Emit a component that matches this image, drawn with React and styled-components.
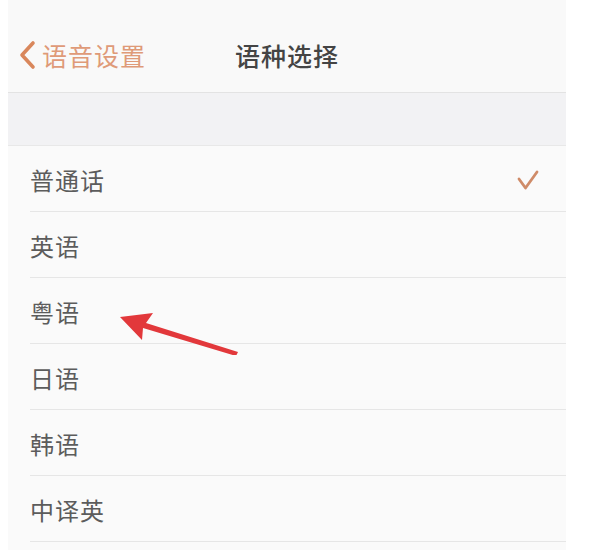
import React from 'react';
import styled, { createGlobalStyle } from 'styled-components';

const GlobalStyle = createGlobalStyle`
  html, body {
    margin: 0;
    padding: 0;
    background: #ffffff;
    font-family: "Noto Sans CJK SC", "Noto Sans", sans-serif;
  }
`;

const languages = ['普通话', '英语', '粤语', '日语', '韩语', '中译英'];

function App() {
  return (
    <>
      <GlobalStyle />
      <Page>
        <Screen>
          <NavBar>
            <BackButton>
              <svg width="18" height="30" viewBox="0 0 18 30">
                <path d="M15 3 L4 15 L15 27" fill="none" stroke="#d9875c" strokeWidth="3.6" strokeLinecap="round" strokeLinejoin="round" />
              </svg>
              <BackLabel>语音设置</BackLabel>
            </BackButton>
            <Title>语种选择</Title>
          </NavBar>
          <SectionGap />
          <List>
            {languages.map((name, i) => (
              <Row key={name}>
                <RowLabel>{name}</RowLabel>
                {i === 0 && (
                  <svg width="24" height="22" viewBox="0 0 24 22">
                    <path d="M3 10 L9.5 19 L21 3" fill="none" stroke="#cf8b68" strokeWidth="2.8" strokeLinecap="round" strokeLinejoin="round" />
                  </svg>
                )}
              </Row>
            ))}
          </List>
          <Pointer width="130" height="52" viewBox="0 0 130 52">
            <polygon points="3,14 36,10 29,20 121,49 119,53 26,25 25,37" fill="#e2383b" />
          </Pointer>
        </Screen>
      </Page>
    </>
  );
}

const Page = styled.div`
  width: 589px;
  height: 550px;
  background: #ffffff;
  overflow: hidden;
`;

const Screen = styled.div`
  position: relative;
  margin-left: 8px;
  width: 558px;
  height: 550px;
  background: #fafafa;
`;

const NavBar = styled.div`
  position: relative;
  height: 68px;
  padding-top: 22px;
  padding-bottom: 2px;
  box-sizing: content-box;
  display: flex;
  align-items: center;
  justify-content: center;
  background: #f9f9f9;
  border-bottom: 1px solid #e3e3e3;
`;

const BackButton = styled.div`
  position: absolute;
  left: 10px;
  top: 22px;
  height: 66px;
  display: flex;
  align-items: center;
  gap: 6px;
`;

const BackLabel = styled.span`
  font-size: 25px;
  color: #df9a78;
  letter-spacing: 1px;
`;

const Title = styled.h1`
  margin: 0;
  margin-bottom: 2px;
  font-size: 25px;
  font-weight: 500;
  color: #444444;
  letter-spacing: 1px;
`;

const SectionGap = styled.div`
  height: 52px;
  background: #f2f2f4;
  border-bottom: 1px solid #e8e8e8;
`;

const List = styled.div`
  display: flex;
  flex-direction: column;
  padding-left: 22px;
  background: #fafafa;
`;

const Row = styled.div`
  height: 66px;
  box-sizing: border-box;
  display: flex;
  align-items: center;
  justify-content: space-between;
  padding-right: 26px;
  padding-top: 2px;
  border-bottom: 1.5px solid #e6e6e6;
`;

const RowLabel = styled.span`
  font-size: 24px;
  color: #5c5c5c;
  letter-spacing: 1px;
`;

const Pointer = styled.svg`
  position: absolute;
  left: 109px;
  top: 303px;
`;

export default App;
